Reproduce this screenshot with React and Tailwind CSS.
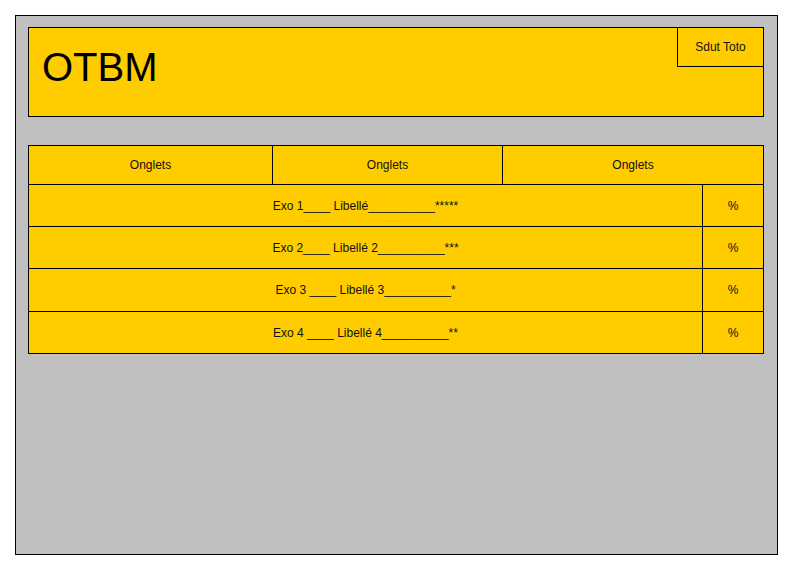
const rows = [
  'Exo 1____ Libellé__________*****',
  'Exo 2____ Libellé 2__________***',
  'Exo 3 ____ Libellé 3__________*',
  'Exo 4 ____ Libellé 4__________**',
];

const heights = ['h-[42px]', 'h-[42px]', 'h-[43px]', 'h-[42px]'];

export default function App() {
  return (
    <div className="w-[792px] h-[569px] bg-white pt-[15px] pl-[15px] font-['Liberation_Sans',Arial,sans-serif] text-[#111]">
      <div className="w-[763px] h-[540px] border border-black bg-[#c0c0c0] pt-[11px] pl-[12px]">
        {/* Header */}
        <div className="w-[736px] h-[90px] border border-black bg-[#ffcc00] flex justify-between">
          <div className="pl-[13px] pt-[19px] text-[40px] leading-[40px] text-black">OTBM</div>
          <div className="w-[86px] h-[39px] border-l border-b border-black flex items-center justify-center text-[12px]">
            Sdut Toto
          </div>
        </div>

        {/* Table */}
        <div className="mt-[28px] w-[736px] border-l border-t border-black bg-[#ffcc00] text-[12px]">
          <div className="flex h-[39px]">
            <div className="w-[244px] border-r border-b border-black flex items-center justify-center">Onglets</div>
            <div className="w-[230px] border-r border-b border-black flex items-center justify-center">Onglets</div>
            <div className="w-[261px] border-r border-b border-black flex items-center justify-center">Onglets</div>
          </div>
          {rows.map((r, i) => (
            <div key={i} className={`flex ${heights[i]}`}>
              <div className="w-[674px] border-r border-b border-black flex items-center justify-center whitespace-pre">{r}</div>
              <div className="w-[61px] border-r border-b border-black flex items-center justify-center">%</div>
            </div>
          ))}
        </div>
      </div>
    </div>
  );
}
